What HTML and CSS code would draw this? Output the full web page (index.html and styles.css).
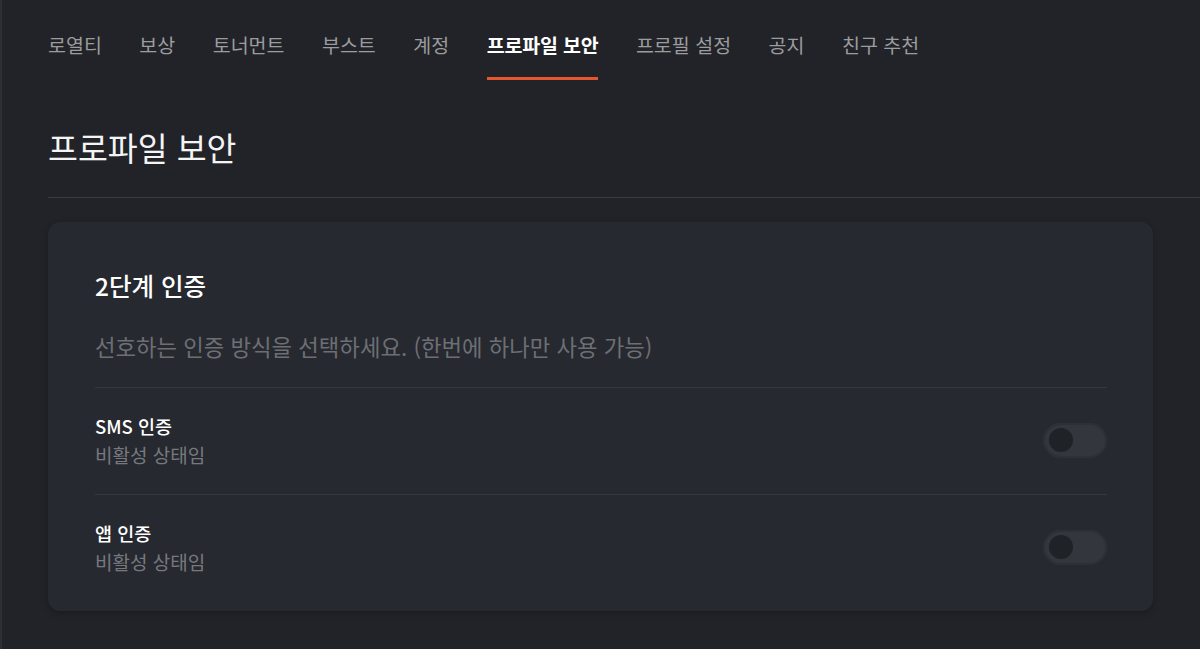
FILE: index.html
```html
<!DOCTYPE html>
<html lang="ko">
<head>
    <meta charset="UTF-8">
    <meta name="viewport" content="width=device-width, initial-scale=1.0">
    <title>프로파일 보안</title>
    <link rel="stylesheet" href="styles.css">
</head>
<body>

    <nav class="tabs">
        <a href="#">로열티</a>
        <a href="#">보상</a>
        <a href="#">토너먼트</a>
        <a href="#">부스트</a>
        <a href="#">계정</a>
        <a href="#" class="active">프로파일 보안</a>
        <a href="#">프로필 설정</a>
        <a href="#">공지</a>
        <a href="#">친구 추천</a>
    </nav>

    <main class="content">
        <h1 class="page-title">프로파일 보안</h1>

        <section class="card">
            <h2 class="card-title">2단계 인증</h2>
            <p class="card-desc">선호하는 인증 방식을 선택하세요. (한번에 하나만 사용 가능)</p>

            <div class="option">
                <div class="option-text">
                    <div class="option-name">SMS 인증</div>
                    <div class="option-state">비활성 상태임</div>
                </div>
                <label class="toggle">
                    <input type="checkbox">
                    <span class="knob"></span>
                </label>
            </div>

            <div class="option">
                <div class="option-text">
                    <div class="option-name">앱 인증</div>
                    <div class="option-state">비활성 상태임</div>
                </div>
                <label class="toggle">
                    <input type="checkbox">
                    <span class="knob"></span>
                </label>
            </div>
        </section>
    </main>

</body>
</html>
```

FILE: styles.css
```css
body {
    margin: 0;
    background-color: #212328;
    color: #f2f2f2;
    font-family: "Noto Sans CJK KR", "Noto Sans", sans-serif;
    border-left: 2px solid #2c2f34;
    min-height: 649px;
    box-sizing: border-box;
}

.tabs {
    display: flex;
    gap: 37.5px;
    padding-left: 46px;
}

.tabs a {
    color: #9b9c9e;
    text-decoration: none;
    font-size: 19.5px;
    line-height: 30px;
    padding: 30px 0 17px;
    border-bottom: 3px solid transparent;
}

.tabs a.active {
    color: #ffffff;
    font-weight: 600;
    letter-spacing: -0.2px;
    border-bottom-color: #e4572e;
}

.content {
    padding-left: 46px;
}

.page-title {
    margin: 47px 0 0;
    padding-bottom: 30px;
    font-size: 32.5px;
    line-height: 40px;
    font-weight: 400;
    color: #f4f4f4;
    border-bottom: 1px solid #3a3d42;
}

.card {
    margin: 24px 47px 0 0;
    padding: 48px 46px 10px 47px;
    background-color: #26292f;
    border-radius: 12px;
    box-shadow: 0 2px 6px rgba(0, 0, 0, 0.25);
}

.card-title {
    margin: 0;
    font-size: 24.5px;
    line-height: 32px;
    font-weight: 500;
    color: #ffffff;
}

.card-desc {
    margin: 30px 0 0;
    padding-bottom: 27px;
    font-size: 22.3px;
    line-height: 28px;
    color: #6d6f74;
    border-bottom: 1px solid #35383d;
}

.option {
    display: flex;
    align-items: center;
    justify-content: space-between;
    padding: 25px 0 23px;
    border-bottom: 1px solid #35383d;
}

.option:last-child {
    border-bottom: none;
}

.option-name {
    font-size: 18.5px;
    line-height: 26px;
    font-weight: 500;
    color: #ffffff;
}

.option-state {
    font-size: 19px;
    line-height: 32px;
    color: #77797e;
}

.toggle {
    position: relative;
    width: 64px;
    height: 35px;
    margin-bottom: 4px;
    border-radius: 18px;
    background-color: #33363c;
    box-shadow: inset 0 0 0 2px #2d3035;
    cursor: pointer;
}

.toggle input {
    display: none;
}

.knob {
    position: absolute;
    left: 6px;
    top: 5px;
    width: 24px;
    height: 24px;
    border-radius: 50%;
    background-color: #1f2226;
}
```
